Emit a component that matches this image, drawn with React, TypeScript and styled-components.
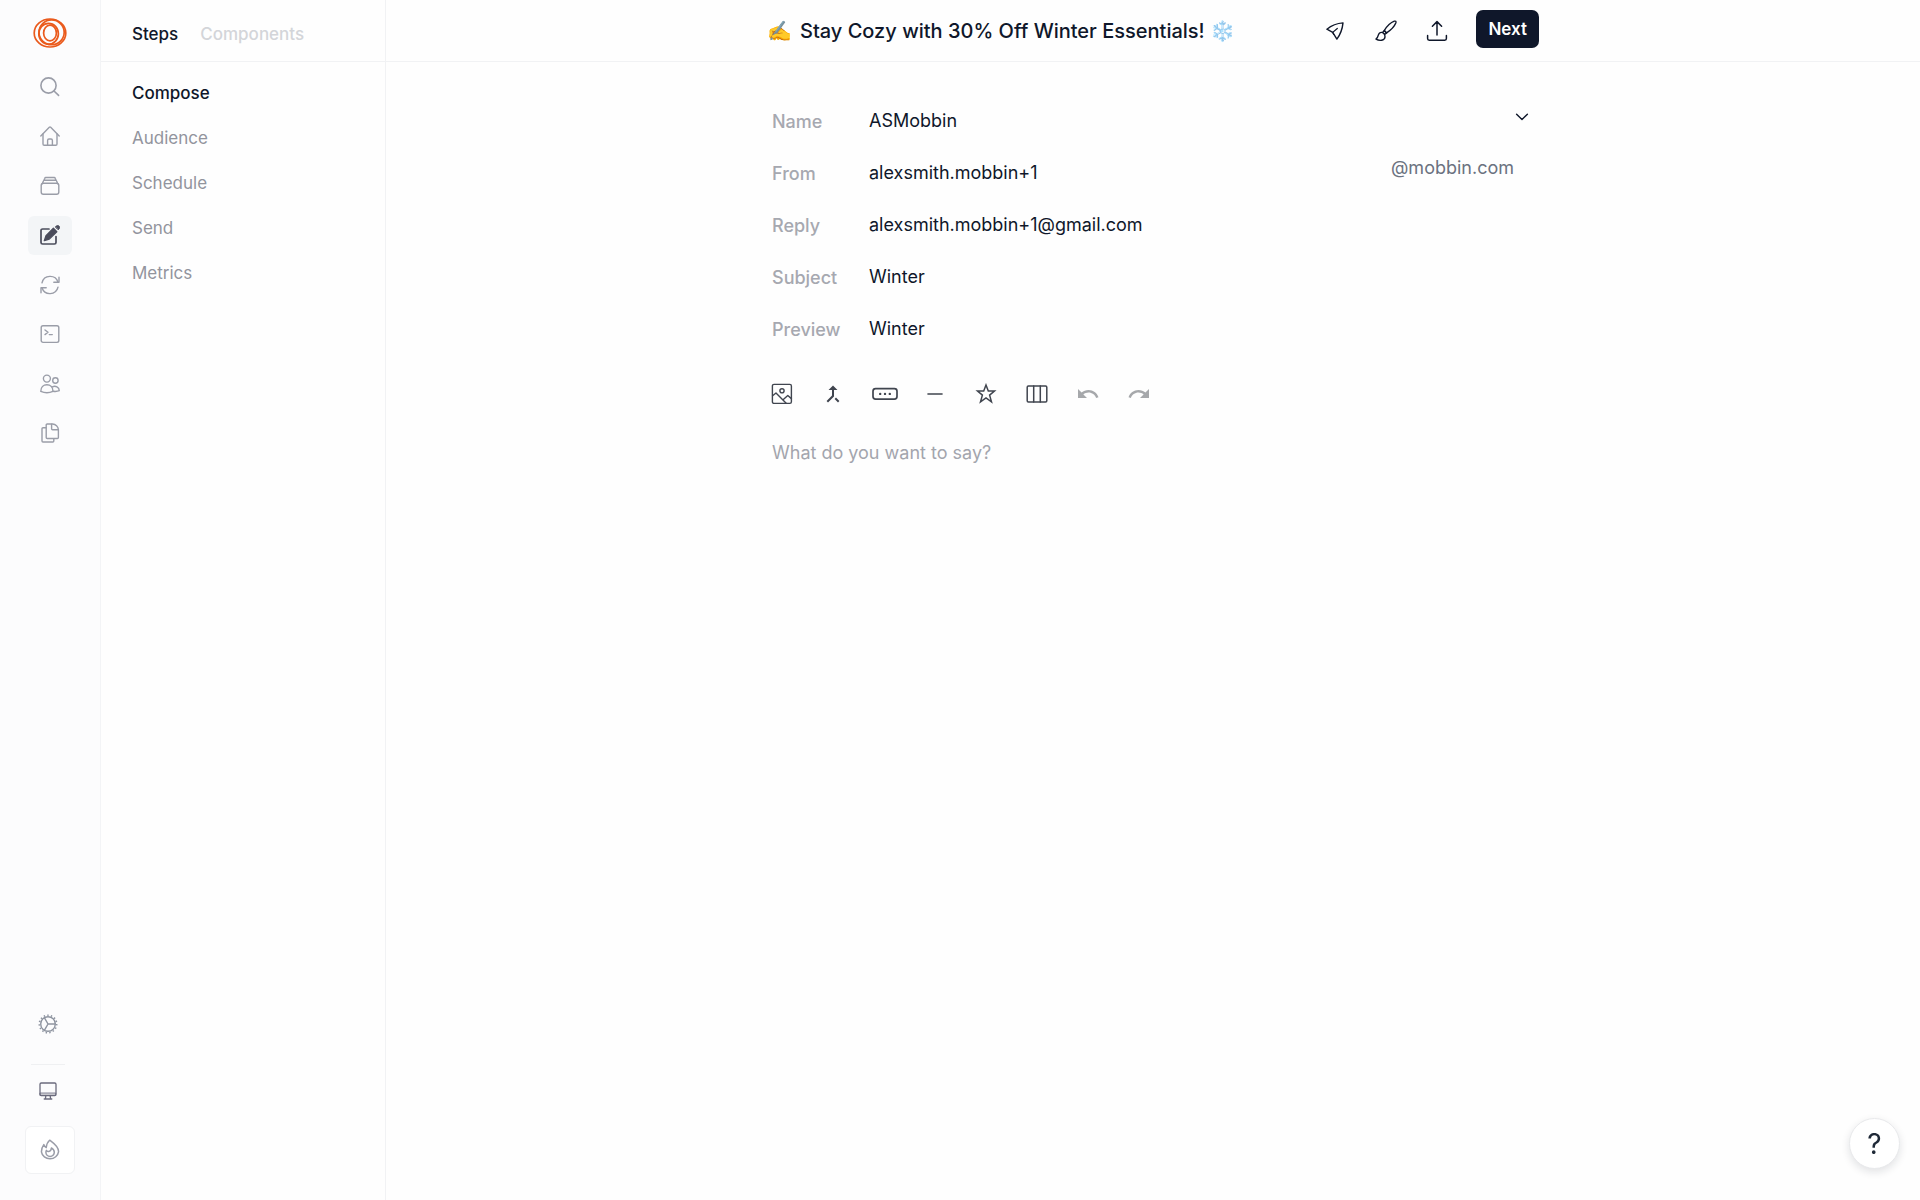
import React from 'react';
import styled, { createGlobalStyle } from 'styled-components';

const GlobalStyle = createGlobalStyle`
  *, *::before, *::after { box-sizing: border-box; }
  body {
    margin: 0;
    background: #fefefe;
    color: #0f172a;
    font-family: Inter, "Liberation Sans", sans-serif;
  }
  button, input, select, textarea { font: inherit; color: inherit; }
  svg { display: block; flex: none; }
`;

const Shell = styled.div`
  display: grid;
  grid-template-columns: 101px 285px minmax(0, 1fr);
  min-height: 100vh;
`;

const Rail = styled.aside`
  display: flex;
  flex-direction: column;
  align-items: center;
  padding: 18px 0 26px;
  background: #fcfcfd;
  border-right: 1px solid #f3f4f6;
`;

const Logo = styled.a`
  display: block;
  padding-bottom: 14px;
`;

const RailNav = styled.nav`
  display: grid;
  grid-auto-rows: 1fr;
  align-items: center;
  height: 396px;
`;

const RailButton = styled.button<{ $active?: boolean }>`
  display: grid;
  place-items: center;
  width: 44px;
  height: 39px;
  padding: 0;
  border: 0;
  border-radius: 6px;
  background: ${(p) => (p.$active ? '#f3f5f7' : 'transparent')};
  color: ${(p) => (p.$active ? '#4b4d5c' : '#9a9da8')};
  cursor: pointer;
`;

const RailFooter = styled.div`
  display: flex;
  flex-direction: column;
  align-items: center;
  margin-top: auto;
`;

const FooterButton = styled(RailButton)<{ $dark?: boolean }>`
  margin-right: 4px;
  color: ${(p) => (p.$dark ? '#6b6b7d' : '#8e94a0')};
`;

const RailDivider = styled.hr`
  width: 34px;
  height: 1px;
  margin: 21px 5px 6px 0;
  border: 0;
  background: #eff0f2;
`;

const FireButton = styled(RailButton)`
  width: 50px;
  height: 48px;
  margin-top: 16px;
  border: 1px solid #f1f2f4;
  background: #fff;
`;

const StepsPanel = styled.section`
  border-right: 1px solid #f1f2f4;
`;

const Tabs = styled.div`
  display: flex;
  align-items: center;
  gap: 22px;
  height: 62px;
  padding: 6px 31px 0;
  border-bottom: 1px solid #f1f2f4;
`;

const Tab = styled.button<{ $active?: boolean }>`
  padding: 0;
  border: 0;
  background: none;
  font-size: 17px;
  font-weight: 500;
  line-height: 24px;
  color: ${(p) => (p.$active ? '#0f172a' : '#d3d5d9')};
  cursor: pointer;
`;

const StepList = styled.ol`
  display: flex;
  flex-direction: column;
  gap: 21px;
  margin: 0;
  padding: 19px 31px;
  list-style: none;
`;

const StepLink = styled.a<{ $active?: boolean }>`
  display: block;
  font-size: 17px;
  font-weight: ${(p) => (p.$active ? 500 : 400)};
  line-height: 24px;
  text-decoration: none;
  color: ${(p) => (p.$active ? '#0f172a' : '#92949d')};
`;

const Main = styled.main`
  min-width: 0;
`;

const TopBar = styled.header`
  height: 62px;
  border-bottom: 1px solid #f1f2f4;
`;

const Column = styled.div`
  max-width: 772px;
  margin: 0 auto;
`;

const TopBarInner = styled(Column)`
  display: flex;
  align-items: center;
  height: 62px;
`;

const EmojiButton = styled.button`
  width: 33px;
  padding: 0;
  border: 0;
  background: none;
  font-size: 20px;
  line-height: 28px;
  text-align: left;
  cursor: pointer;
`;

const TitleInput = styled.input`
  flex: 1;
  min-width: 0;
  padding: 0;
  border: 0;
  outline: 0;
  background: none;
  font-size: 20px;
  font-weight: 500;
  line-height: 28px;
`;

const Actions = styled.div`
  display: flex;
  align-items: center;
  gap: 27px;
`;

const IconButton = styled.button<{ $muted?: boolean }>`
  display: grid;
  place-items: center;
  width: 24px;
  height: 24px;
  padding: 0;
  border: 0;
  background: none;
  color: ${(p) => (p.$muted ? '#a6a8ab' : 'inherit')};
  cursor: pointer;
`;

const NextButton = styled.button`
  height: 38px;
  margin-bottom: 4px;
  padding: 0 12px;
  border: 0;
  border-radius: 7px;
  background: #0f172a;
  color: #fff;
  font-size: 17px;
  font-weight: 600;
  line-height: 24px;
  cursor: pointer;
`;

const Composer = styled(Column)`
  padding: 41px 5px 0;
`;

const Field = styled.div`
  display: grid;
  grid-template-columns: 97px minmax(0, 1fr) auto;
  align-items: center;
  height: 36px;
  margin-bottom: 16px;
`;

const FieldLabel = styled.label`
  padding-top: 2px;
  font-size: 18px;
  font-weight: 500;
  line-height: 24px;
  color: #a6a8b0;
`;

const FieldInput = styled.input`
  width: 100%;
  padding: 0;
  border: 0;
  outline: 0;
  background: none;
  font-size: 18px;
  line-height: 24px;
`;

const FieldSelect = styled.select`
  width: 100%;
  padding: 0;
  border: 0;
  outline: 0;
  appearance: none;
  background: none;
  font-size: 18px;
  line-height: 24px;
`;

const FieldAside = styled.span`
  align-self: start;
  padding: 1px 20px 0 12px;
  font-size: 18px;
  line-height: 24px;
  color: #6b7280;
`;

const Chevron = styled.span`
  align-self: start;
  padding: 10px 5px 0 0;
  pointer-events: none;
`;

const Toolbar = styled.div`
  display: flex;
  gap: 27px;
  margin: 35px -2px 0;
  color: #40454f;
`;

const Body = styled.textarea`
  display: block;
  width: 100%;
  min-height: 240px;
  margin-top: 34px;
  padding: 0;
  border: 0;
  outline: 0;
  resize: none;
  background: none;
  font-size: 18px;
  line-height: 26px;
  &::placeholder { color: #a3a5ad; opacity: 1; }
`;

const HelpButton = styled.button`
  position: fixed;
  right: 20px;
  bottom: 31px;
  display: grid;
  place-items: center;
  width: 51px;
  height: 51px;
  padding: 0;
  border: 1px solid #e8e9eb;
  border-radius: 50%;
  background: #fff;
  box-shadow: 0 3px 8px rgba(15, 23, 42, 0.12);
  font-size: 28px;
  font-weight: 400;
  line-height: 32px;
  color: #1f2937;
  cursor: pointer;
`;

type IconProps = { w?: number; h?: number; sw?: number; children: React.ReactNode };
const Icon = ({ w = 20, h = 20, sw = 1.4, children }: IconProps) => (
  <svg width={w} height={h} viewBox={`0 0 ${w} ${h}`} fill="none" stroke="currentColor"
    strokeWidth={sw} strokeLinecap="round" strokeLinejoin="round" aria-hidden="true">
    {children}
  </svg>
);

const LogoIcon = () => (
  <svg width="34" height="30" viewBox="0 0 34 30" fill="none" stroke="#ea5a1c" strokeWidth="1.7" aria-hidden="true">
    <ellipse cx="17" cy="15" rx="15.8" ry="14" />
    <ellipse cx="18.6" cy="14.300" rx="12.600" ry="12.400" />
    <ellipse cx="15.600" cy="15.700" rx="9.800" ry="10.400" />
    <ellipse cx="17" cy="15" rx="6.400" ry="7.800" />
  </svg>
);

const SearchIcon = () => (
  <Icon sw={1.6}><circle cx="8.5" cy="8.5" r="7.6" /><path d="M14 14l4.6 4.4" /></Icon>
);
const HomeIcon = () => (
  <Icon>
    <path d="M.8 10L9.3 1.3a1 1 0 0 1 1.4 0L19.2 10" />
    <path d="M3 8v10a1.2 1.2 0 0 0 1.2 1.2h11.6A1.2 1.2 0 0 0 17 18V8" />
    <path d="M7.6 19v-4.6a1.4 1.4 0 0 1 1.4-1.4h2a1.4 1.4 0 0 1 1.4 1.4V19" />
  </Icon>
);
const StackIcon = () => (
  <Icon>
    <rect x="1.2" y="7.2" width="17.6" height="11" rx="2.2" />
    <path d="M2.4 7.600l1-2.700a1 1 0 0 1 1-.7h11.200a1 1 0 0 1 1 .7l1 2.700M4 4.200l.8-2a1 1 0 0 1 1-.7h8.400a1 1 0 0 1 1 .7l.8 2" />
  </Icon>
);
const ComposeIcon = () => (
  <Icon sw={1.7}>
    <path d="M9 4H2.6A1.6 1.6 0 0 0 1 5.600v11.800A1.600 1.600 0 0 0 2.600 19h11.800a1.600 1.600 0 0 0 1.600-1.600V11.500" />
    <path d="M4.300 15.700l1.700-5 7.400-7.400 3.400 3.400-7.500 7.400z" fill="currentColor" strokeWidth="1.300" />
    <path d="M15.600 1.700l.6-.6a1.900 1.900 0 0 1 2.800 2.800l-.7.600z" fill="currentColor" strokeWidth="1" />
  </Icon>
);
const RefreshIcon = () => (
  <Icon>
    <path d="M2 7.800a8.300 8.300 0 0 1 16-.6M18 12.200a8.300 8.300 0 0 1-16 .6" />
    <path d="M19 2.300V7.300h-5.200M1 17.800v-5h5.200" />
  </Icon>
);
const TerminalIcon = () => (
  <Icon>
    <rect x="1.200" y="1.800" width="17.600" height="16.600" rx="1.800" />
    <path d="M5 6l3 2.300L5 10.600M9.300 10.600h3" />
  </Icon>
);
const UsersIcon = () => (
  <Icon>
    <circle cx="6.900" cy="4.600" r="3.500" />
    <circle cx="15.400" cy="6.500" r="2.700" />
    <path d="M.8 17.400c0-4 2.600-6.600 6.100-6.600s6.100 2.600 6.100 6.600c-3.600 1.600-8.600 1.600-12.200 0z" />
    <path d="M12.400 12.800c3-1.600 6.800.2 6.900 3.900-1.700.8-4 .9-6.300.6" />
  </Icon>
);
const FilesIcon = () => (
  <Icon>
    <path d="M7.200 1h5.400c3 .2 5.600 2.600 5.800 5.600v7.900a1 1 0 0 1-1 1H7.200a1 1 0 0 1-1-1V2a1 1 0 0 1 1-1z" />
    <path d="M11.600 1.200V5.800a1 1 0 0 0 1 1h5.600M6 4.800H3a1 1 0 0 0-1 1V18a1 1 0 0 0 1 1h9.800a1 1 0 0 0 1-1v-2.400" />
  </Icon>
);
const GearIcon = () => (
  <Icon>
    <circle cx="10" cy="10" r="7.300" />
    <circle cx="10" cy="10" r="8.700" strokeWidth="1.600" strokeDasharray="1.400 2.237" strokeLinecap="butt" />
    <path d="M10 10h7M10 10L6.500 3.900M10 10l-3.500 6.100" />
  </Icon>
);
const MonitorIcon = () => (
  <Icon w={18} h={18} sw={1.300}>
    <rect x="1" y="1" width="16" height="12.600" rx="1.300" />
    <path d="M1.300 11h15.400v2.300H1.300z" fill="currentColor" fillOpacity=".25" strokeWidth=".8" />
    <path d="M6.800 13.800l-.4 3M11.200 13.800l.4 3M5.200 17h7.600" />
  </Icon>
);
const FireIcon = () => (
  <Icon w={22} h={22} sw={1.500}>
    <path d="M10.600 1.200c3.200 2.400 9 6 9 11.500a8.700 8.300 0 0 1-17.200.2c0-2.700.8-5.100 2.400-7.300.6 1.600 1.300 2.500 2.400 3C7.600 5.400 8.600 2.900 10.600 1.200z" />
    <path d="M12.400 9c1.800 1 2.900 2.400 2.900 4.300a4.200 4.200 0 0 1-8.400 0c0-.7.200-1.300.5-1.900.7.900 1.500 1.300 2.400 1.200 1.500-.2 2.400-1.500 2.600-3.600z" />
  </Icon>
);
const SendIcon = () => (
  <Icon w={18} h={18} sw={1.400}>
    <path d="M17 .9C11 1.300 5.600 3.400.9 7.200l5.800 3.200 4.200 6.700C14.400 12.400 16.400 7 17 .9z" />
    <path d="M6.700 10.400l4.600-3.900M6.900 10.800l.8 1.700" strokeWidth="1.200" />
  </Icon>
);
const BrushIcon = () => (
  <Icon w={22} h={22} sw={1.400}>
    <path d="M9.200 10.600C12 6.200 15.400 2.700 19.300 1.200c1.300-.4 2 .3 1.600 1.600-1.500 3.900-5 7.300-9.300 10.100z" />
    <path d="M9.200 10.600l2.400 2.300-1.900 1.700-2.100-2.100zM7.600 12.500c-2-.4-3.600.4-4.200 2.400-.4 1.700-1 3-2.400 4.200 3.300 2 8.700 1.700 9-2.100 0-.9-.1-1.700-.5-2.300" />
  </Icon>
);
const UploadIcon = () => (
  <Icon w={22} h={22} sw={1.500}>
    <path d="M11 15V1.800M6.400 6.200L11 1.600l4.600 4.600M1.600 15.600v3a1.600 1.600 0 0 0 1.600 1.600h15.600a1.600 1.600 0 0 0 1.600-1.600v-3" />
  </Icon>
);
const ChevronIcon = () => (
  <Icon w={14} h={8} sw={1.400}><path d="M1.600 1.200L7 6.600l5.400-5.400" /></Icon>
);
const ImageIcon = () => (
  <Icon w={22} h={22} sw={1.400}>
    <rect x="1.400" y="1.400" width="19" height="19" rx="1.600" />
    <circle cx="11" cy="7.800" r="2.100" />
    <path d="M1.600 12.800L5 10l10.200 10.200M12.600 16.200l4.200-3.700 3.600 3.100" />
  </Icon>
);
const FilledIcon = ({ d, size = 24 }: { d: string; size?: number }) => (
  <svg width={size} height={size} viewBox="0 0 24 24" fill="currentColor" aria-hidden="true"><path d={d} /></svg>
);
const MERGE = 'M17 20.410L18.410 19 15 15.590 13.590 17 17 20.410zM7.500 8H11v5.590L5.590 19 7 20.410l6-6V8h3.500L12 3.500 7.500 8z';
const UNDO = 'M12.500 8c-2.650 0-5.050.99-6.900 2.600L2 7v9h9l-3.620-3.620c1.390-1.160 3.160-1.880 5.120-1.880 3.540 0 6.550 2.310 7.600 5.500l2.370-.78C21.080 11.030 17.150 8 12.500 8z';
const REDO = 'M18.400 10.600C16.550 8.990 14.150 8 11.500 8c-4.650 0-8.580 3.030-9.960 7.220L3.900 16c1.050-3.190 4.050-5.500 7.600-5.500 1.950 0 3.730.72 5.120 1.880L13 16h9V7l-3.600 3.600z';
const ButtonIcon = () => (
  <Icon w={26} h={14} sw={1.700}>
    <rect x="1" y="1.600" width="24" height="10.600" rx="2.600" />
    <g fill="currentColor" stroke="none">
      <circle cx="8.200" cy="6.900" r="1.200" /><circle cx="13" cy="6.900" r="1.200" /><circle cx="17.800" cy="6.900" r="1.200" />
    </g>
  </Icon>
);
const MinusIcon = () => <Icon w={16} h={16} sw={1.600}><path d="M1 8h14" /></Icon>;
const StarIcon = () => (
  <svg width="22" height="22" viewBox="0 0 22 22" fill="none" stroke="currentColor" strokeWidth="1.500" aria-hidden="true">
    <path d="M11 2l2.300 6h6.200l-4.900 4.100 1.900 6.700L11 14.900l-5.500 3.900 1.900-6.700L2.500 8h6.200z" />
  </svg>
);
const ColumnsIcon = () => (
  <Icon w={22} h={18} sw={1.500}>
    <rect x="1.200" y="1" width="19.600" height="16" rx="1.200" /><path d="M7.700 1v16M14.300 1v16" />
  </Icon>
);

const railItems = [
  { label: 'Search', icon: <SearchIcon /> },
  { label: 'Home', icon: <HomeIcon /> },
  { label: 'Library', icon: <StackIcon /> },
  { label: 'Compose', icon: <ComposeIcon />, active: true },
  { label: 'Loops', icon: <RefreshIcon /> },
  { label: 'Transactional', icon: <TerminalIcon /> },
  { label: 'Audience', icon: <UsersIcon /> },
  { label: 'Forms', icon: <FilesIcon /> },
];

const steps = ['Compose', 'Audience', 'Schedule', 'Send', 'Metrics'];

const tools = [
  { label: 'Image', icon: <ImageIcon /> },
  { label: 'Merge tag', icon: <FilledIcon d={MERGE} /> },
  { label: 'Button', icon: <ButtonIcon /> },
  { label: 'Divider', icon: <MinusIcon /> },
  { label: 'Icon', icon: <StarIcon /> },
  { label: 'Columns', icon: <ColumnsIcon /> },
  { label: 'Undo', icon: <FilledIcon d={UNDO} />, muted: true },
  { label: 'Redo', icon: <FilledIcon d={REDO} />, muted: true },
];

export default function App() {
  return (
    <>
      <GlobalStyle />
      <Shell>
        <Rail>
          <Logo href="#" aria-label="Loops"><LogoIcon /></Logo>
          <RailNav aria-label="Main">
            {railItems.map((item) => (
              <RailButton key={item.label} type="button" aria-label={item.label} $active={item.active}>
                {item.icon}
              </RailButton>
            ))}
          </RailNav>
          <RailFooter>
            <FooterButton type="button" aria-label="Settings"><GearIcon /></FooterButton>
            <RailDivider />
            <FooterButton type="button" aria-label="Display" $dark><MonitorIcon /></FooterButton>
            <FireButton type="button" aria-label="Getting started"><FireIcon /></FireButton>
          </RailFooter>
        </Rail>

        <StepsPanel>
          <Tabs>
            <Tab type="button" $active>Steps</Tab>
            <Tab type="button">Components</Tab>
          </Tabs>
          <StepList>
            {steps.map((step, i) => (
              <li key={step}><StepLink href="#" $active={i === 0}>{step}</StepLink></li>
            ))}
          </StepList>
        </StepsPanel>

        <Main>
          <TopBar>
            <TopBarInner>
              <EmojiButton type="button" aria-label="Change emoji">✍️</EmojiButton>
              <TitleInput aria-label="Campaign name" defaultValue="Stay Cozy with 30% Off Winter Essentials! ❄️" />
              <Actions>
                <IconButton type="button" aria-label="Send test"><SendIcon /></IconButton>
                <IconButton type="button" aria-label="Styles"><BrushIcon /></IconButton>
                <IconButton type="button" aria-label="Upload"><UploadIcon /></IconButton>
                <NextButton type="button">Next</NextButton>
              </Actions>
            </TopBarInner>
          </TopBar>

          <Composer>
            <Field>
              <FieldLabel htmlFor="name">Name</FieldLabel>
              <FieldSelect id="name" defaultValue="ASMobbin"><option>ASMobbin</option></FieldSelect>
              <Chevron><ChevronIcon /></Chevron>
            </Field>
            <Field>
              <FieldLabel htmlFor="from">From</FieldLabel>
              <FieldInput id="from" defaultValue="alexsmith.mobbin+1" />
              <FieldAside>@mobbin.com</FieldAside>
            </Field>
            <Field>
              <FieldLabel htmlFor="reply">Reply</FieldLabel>
              <FieldInput id="reply" defaultValue="alexsmith.mobbin+1@gmail.com" />
            </Field>
            <Field>
              <FieldLabel htmlFor="subject">Subject</FieldLabel>
              <FieldInput id="subject" defaultValue="Winter" />
            </Field>
            <Field>
              <FieldLabel htmlFor="preview">Preview</FieldLabel>
              <FieldInput id="preview" defaultValue="Winter" />
            </Field>

            <Toolbar role="toolbar" aria-label="Insert">
              {tools.map((tool) => (
                <IconButton key={tool.label} type="button" aria-label={tool.label} $muted={tool.muted}>
                  {tool.icon}
                </IconButton>
              ))}
            </Toolbar>
            <Body aria-label="Message" placeholder="What do you want to say?" />
          </Composer>
        </Main>
      </Shell>
      <HelpButton type="button" aria-label="Help">?</HelpButton>
    </>
  );
}
